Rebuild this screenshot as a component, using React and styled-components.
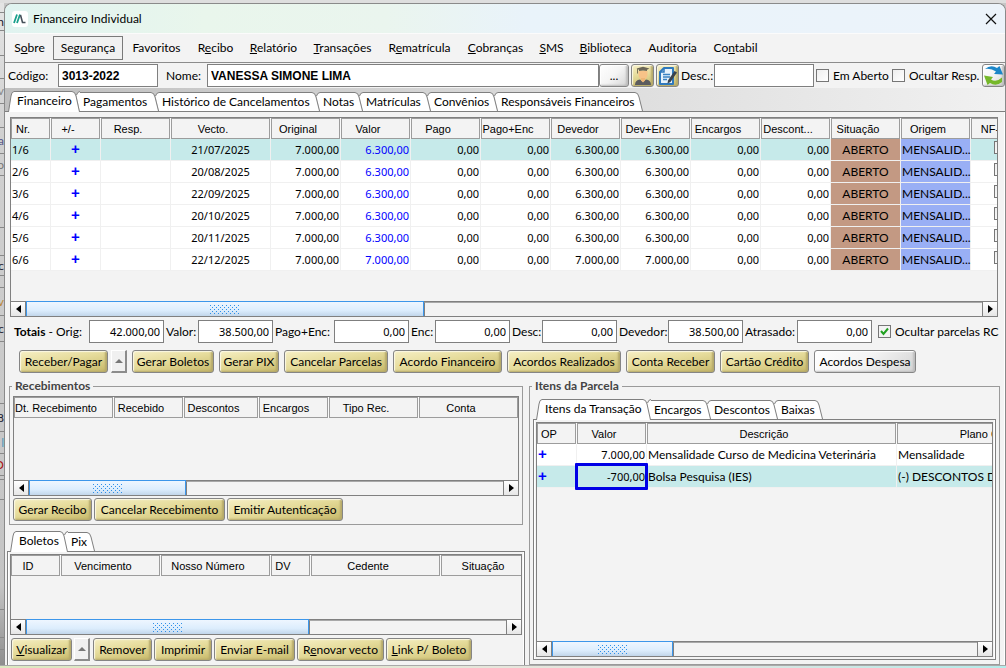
import React from "react";
import styled, { createGlobalStyle, css } from "styled-components";

const Global = createGlobalStyle`
  * { box-sizing: border-box; }
  body { margin: 0; background: #c6c6c6; font: 12px/16px Lato, "Segoe UI", sans-serif; color: #000; }
  button, input { font: inherit; color: inherit; margin: 0; }
  button { padding: 0; }
`;

const Desktop = styled.div`
  display: grid;
  grid-template-columns: 4px minmax(0, 1fr);
  grid-template-rows: 3px auto 1fr;
  min-height: 100vh;
  overflow: hidden;
`;

const TopStrip = styled.div`
  grid-column: 1 / -1;
  background: #dedede;
`;

const Behind = styled.div`
  display: flex;
  flex-direction: column;
  background: linear-gradient(#e4e4e4, #d0d0d0 20%, #c4c4c4 88%, #8e8e8e);
  overflow: hidden;
`;

const Sliver = styled.span`
  display: flex;
  align-items: center;
  justify-content: flex-end;
  height: ${(p) => p.$h}px;
  flex: none;
  border-bottom: 1px solid #888;
  color: ${(p) => p.$c || "#223"};
  overflow: hidden;
`;

const BottomStrip = styled.div`
  grid-column: 1 / -1;
  min-height: 3px;
  border-top: 1px solid #a9a9a9;
  background: linear-gradient(90deg, #dce8c0, #e6e6dc 50%, #e0e4e0 70%, #b4ecea);
`;

const Window = styled.main`
  border: 1px solid #8a8a8a;
  border-width: 1px 1px 0 1px;
  border-radius: 8px 8px 0 0;
  background: #f3f3f3;
  overflow: hidden;
`;

const TitleBar = styled.header`
  display: flex;
  align-items: center;
  height: 30px;
  padding: 0 8px 0 7px;
  gap: 5px;
  background: linear-gradient(90deg, #e0f3f0, #e9f6ec 20%, #eaf5ee 38%, #e9f3fa 52%, #ecf3fa);
  border-bottom: 1px solid #fbfbfb;
`;

const Title = styled.h1`
  flex: 1;
  margin: 0;
  font: inherit;
`;

const IconButton = styled.button`
  display: flex;
  border: 0;
  background: none;
`;

const MenuBar = styled.nav`
  display: flex;
  align-items: center;
  height: 29px;
  padding-left: 1px;
  border-bottom: 1px solid #8c8c8c;
`;

const MenuItem = styled.button`
  width: ${(p) => p.$w}px;
  height: 24px;
  margin-right: ${(p) => (p.$boxed ? 1 : 0)}px;
  border: 1px solid ${(p) => (p.$boxed ? "#7a7a7a" : "transparent")};
  background: ${(p) => (p.$boxed ? "#f1f1f1" : "none")};
  white-space: nowrap;
`;

const ToolRow = styled.div`
  display: flex;
  align-items: center;
  height: 25px;
  padding-left: 3px;
`;

const ToolLabel = styled.label`
  flex: none;
  width: ${(p) => p.$w}px;
  padding-left: ${(p) => p.$pad || 0}px;
  white-space: nowrap;
`;

const Field = styled.input`
  flex: none;
  width: ${(p) => p.$w}px;
  height: 23px;
  padding: 0 3px;
  border: 1px solid #7f7f7f;
  border-radius: 0;
  background: #fff;
  ${(p) => p.$strong && css`font: bold 12px "Liberation Sans", Arial, sans-serif;`}
  ${(p) => p.$grow && css`flex: 1; min-width: 0;`}
  ${(p) => p.$num && css`font: 11px "Noto Sans", sans-serif; text-align: right;`}
`;

const Check = styled.input.attrs({ type: "checkbox" })`
  appearance: none;
  flex: none;
  width: 13px;
  height: 13px;
  border: 1px solid #767676;
  background: linear-gradient(135deg, #eee, #fff);
  &:checked {
    background: url("data:image/svg+xml,%3Csvg xmlns='http://www.w3.org/2000/svg' viewBox='0 0 11 11'%3E%3Cpath d='M2 5l2.5 3L9 2.5' fill='none' stroke='%2321a121' stroke-width='2'/%3E%3C/svg%3E");
  }
`;

const CheckLabel = styled.label`
  display: flex;
  flex: none;
  align-items: center;
  gap: 4px;
  width: ${(p) => p.$w}px;
  white-space: nowrap;
`;

const Button = styled.button`
  display: flex;
  flex: none;
  align-items: center;
  justify-content: center;
  width: ${(p) => p.$w}px;
  height: 23px;
  border: 1px solid #858585;
  border-radius: 3px;
  white-space: nowrap;
  background: ${(p) =>
    p.$plain
      ? "linear-gradient(135deg, #fff, #f4f4f4 50%, #d4d4d4)"
      : "linear-gradient(170deg, #f6efc4, #e6dc9c 45%, #d3c67c 80%, #c5b768)"};
  box-shadow: inset 1px 1px 1px ${(p) => (p.$plain ? "#fff" : "#fbf8e4")},
    inset -2px -1px 2px ${(p) => (p.$plain ? "#bdbdbd" : "#b5a96a")};
`;

const DropButton = styled.button`
  flex: none;
  display: flex;
  align-items: center;
  justify-content: center;
  width: 16px;
  height: 23px;
  border: solid;
  border-width: 1px 2px 2px 1px;
  border-color: #fff #8c8c8c #8c8c8c #fff;
  background: #f0f0f0;
`;

const TabStrip = styled.div`
  display: flex;
  align-items: flex-end;
  height: ${(p) => p.$h}px;
  padding-left: 3px;
  border-bottom: 1px solid #7f7f7f;
  background: ${(p) => (p.$shaded ? "linear-gradient(90deg, #bfbfbf, #f1f1f1)" : "none")};
`;

const TabBox = styled.button`
  display: flex;
  flex: none;
  width: ${(p) => p.$w}px;
  height: ${(p) => (p.$on ? 21 : 19)}px;
  margin-bottom: ${(p) => (p.$on ? -1 : 0)}px;
  border: 0;
  background: none;
`;

const TabText = styled.span`
  flex: 1;
  height: 100%;
  min-width: 0;
  border-top: 1px solid #7f7f7f;
  background: #fff;
  line-height: 18px;
  white-space: nowrap;
  padding-left: 3px;
  text-align: left;
`;

const Page = styled.section`
  padding: 5px 0 0;
  border-right: 1px solid #fff;
`;

const GridBox = styled.div`
  display: flex;
  flex-direction: column;
  height: ${(p) => p.$h}px;
  margin: ${(p) => p.$m || 0};
  border: 1px solid #808080;
  overflow: hidden;
`;

const GridView = styled.div`
  flex: 1;
  min-height: 0;
  overflow: hidden;
`;

const Table = styled.table`
  table-layout: fixed;
  width: ${(p) => p.$w}px;
  border-collapse: separate;
  border-spacing: 0;
`;

const Th = styled.th`
  width: ${(p) => p.$w}px;
  height: 21px;
  padding: 0 15px 0 0;
  border: 0;
  border-right: 1px solid #fafafa;
  box-shadow: inset 0 0 0 1px #9c9c9c;
  font: 11px/16px "Liberation Sans", Arial, sans-serif;
  text-align: center;
  white-space: nowrap;
  background: #f3f3f3;
`;

const Row = styled.tr`
  background: ${(p) => (p.$on ? "#c6eaea" : "#fff")};
`;

const fills = { brown: "#c39983", blue: "#99aff5" };
const Td = styled.td`
  position: relative;
  height: 22px;
  padding: 0 1px;
  border-right: 1px solid #f0f0f0;
  border-bottom: 1px solid #f0f0f0;
  text-align: ${(p) => p.$a || "left"};
  white-space: nowrap;
  color: ${(p) => p.$c || "#000"};
  background: ${(p) => fills[p.$fill] || "none"};
  ${(p) => p.$num && css`font: 11px/16px "Noto Sans", sans-serif;`}
`;

const Plus = styled.span`
  font: bold 15px/14px "Liberation Sans", sans-serif;
  color: #00f;
`;

const Highlight = styled.span`
  position: absolute;
  inset: -3px -2px -3px -2px;
  border: 3px solid #0000e6;
  border-radius: 1px;
  z-index: 1;
`;

const Scroll = styled.div`
  display: flex;
  flex: none;
  height: 15px;
  border-top: 1px solid #808080;
`;

const ScrollArrow = styled.button`
  display: flex;
  flex: none;
  align-items: center;
  justify-content: center;
  width: 15px;
  border: 0;
  background: linear-gradient(#fff, #e6e6e6);
  border-${(p) => (p.$right ? "left" : "right")}: 1px solid #808080;
`;

const Thumb = styled.div`
  display: flex;
  flex: none;
  align-items: center;
  justify-content: center;
  width: ${(p) => p.$w}px;
  margin-top: -1px;
  border: 1px solid #3c96ea;
  border-bottom: 0;
  background: linear-gradient(#eef6ff, #dcedfd 60%, #c2d6ea);
`;

const Track = styled.div`
  flex: 1;
  border-top: 1px solid #a8a8a8;
  border-left: 1px solid #808080;
`;

const Totals = styled.div`
  display: flex;
  align-items: center;
  gap: 2px;
  padding: 3px 0 0 9px;
  overflow: hidden;
`;

const TotalLabel = styled.label`
  display: flex;
  flex: none;
  align-items: center;
  white-space: nowrap;
`;

const TotalText = styled.span`
  width: ${(p) => p.$w}px;
`;

const Actions = styled.div`
  display: flex;
  gap: ${(p) => p.$gap || 2}px;
  padding: ${(p) => p.$p};
`;

const Lower = styled.div`
  display: grid;
  grid-template-columns: minmax(0, 518fr) minmax(0, 471fr);
  gap: 4px;
  padding: 5px 4px 0 2px;
`;

const Left = styled.div`
  display: flex;
  flex-direction: column;
  gap: 6px;
`;

const Group = styled.fieldset`
  min-width: 0;
  margin: ${(p) => p.$m || 0};
  padding: ${(p) => p.$p};
  border: 1px solid #9a9a9a;
`;

const Legend = styled.legend`
  margin-left: ${(p) => p.$ml || 0}px;
  padding: 0 3px;
  font-weight: bold;
  color: #444;
`;

const Panel = styled.div`
  padding: 2px;
  border: 1px solid #808080;
  border-top: 0;
  border-bottom-width: ${(p) => (p.$open ? 0 : 1)}px;
  box-shadow: inset -1px 0 #fff, inset 1px 0 #fff;
`;

const Logo = () => (
  <svg width="16" height="16" viewBox="0 0 16 16">
    <rect width="16" height="16" rx="3" fill="#fff" />
    <path d="M2 12L5 3.500M5 12L8 3.500" stroke="#19a08c" strokeWidth="1.800" fill="none" />
    <path d="M8.500 4L10.500 11.500H13.500" stroke="#46505a" strokeWidth="1.600" fill="none" />
  </svg>
);

const Arrow = ({ right }) => (
  <svg width="5" height="8" viewBox="0 0 5 8">
    <path d={right ? "M0 0L5 4L0 8Z" : "M5 0L0 4L5 8Z"} />
  </svg>
);

const Up = () => (
  <svg width="8" height="4" viewBox="0 0 8 4"><path d="M0 4L4 0L8 4Z" fill="#777" /></svg>
);

const Dots = () => {
  const out = [];
  for (let y = 0; y < 5; y++)
    for (let x = 0; x < 8; x++)
      out.push(<rect key={x + "-" + y} x={x * 4 + (y % 2) * 2} y={y * 2} width="1" height="1" fill="#2f8fe8" />);
  return <svg width="30" height="9" shapeRendering="crispEdges">{out}</svg>;
};

const Student = () => (
  <svg width="20" height="20" viewBox="0 0 20 20">
    <path d="M2 19Q2 14 7 13.500L10 16L13 13.500Q18 14 18 19Z" fill="#5c5c5e" />
    <path d="M5.500 5H14.500V9Q14 13 10 14Q6 13 5.500 9Z" fill="#f7c388" />
    <path d="M8 12H12V14.500L10 16.500L8 14.500Z" fill="#eeb677" />
    <path d="M3.500 2.500L10 .8L16.500 2.500L14 3.800V5Q10 4 6 5V3.800Z" fill="#6b6657" />
    <path d="M4.500 3V7.500" stroke="#7b7458" />
  </svg>
);

const Note = () => (
  <svg width="20" height="20" viewBox="0 0 20 20">
    <path d="M6 2H15V18H2V6Z" fill="#e6f2fb" stroke="#2f79bd" strokeWidth="2" strokeLinejoin="round" />
    <path d="M6 2V6H2" fill="none" stroke="#2f79bd" strokeWidth="1.500" />
    <path d="M5 8.500H12M5 11H12M5 13.500H9" stroke="#3a83c2" strokeWidth="1.300" />
    <path d="M10 14.500L16.500 5L19 6.500L12.500 16L9.500 17.500Z" fill="#39424c" />
  </svg>
);

const Refresh = () => (
  <svg width="21" height="21" viewBox="0 0 21 21">
    <path d="M2 4Q8-1 14 3L16.500 1L20 9.500L11 9L13 6.500Q8 3 2 4Z" fill="#1c86c8" />
    <path d="M19 17Q13 22 7 18L4.500 20L1 10.500L10 12L8 14.500Q13 18 19 12.500Z" fill="#76b82a" />
  </svg>
);

const Close = () => (
  <svg width="12" height="12" viewBox="0 0 12 12">
    <path d="M1 1L11 11M11 1L1 11" stroke="#111" strokeWidth="1.200" />
  </svg>
);

const TabLeft = () => (
  <svg width="6" height="21" viewBox="0 0 6 21">
    <path d="M0.500 21L3 5Q3.600 0.500 6 0.500V21Z" fill="#fff" />
    <path d="M0.500 21L3 5Q3.600 0.500 6 0.500" fill="none" stroke="#7f7f7f" />
  </svg>
);

const TabRight = ({ h, last }) => (
  <svg width="8" height={h} viewBox={`0 0 8 ${h}`}>
    <path d={`M0 .5Q3 .5 4 5L7.500 ${h}H0Z`} fill="#fff" />
    {!last && <path d={`M8 .5Q5 .5 4.500 4.500L8 ${h}Z`} fill="#fff" />}
    <path d={`M0 .5Q3 .5 4 5L7.500 ${h}`} fill="none" stroke="#7f7f7f" />
    {!last && <path d="M8 .5Q5.500 .5 4.500 4" fill="none" stroke="#7f7f7f" />}
  </svg>
);

const Tabs = ({ items, h, shaded }) => (
  <TabStrip $h={h} $shaded={shaded} role="tablist">
    {items.map(([t, w], i) => (
      <TabBox key={t} $w={w} $on={i === 0} role="tab" aria-selected={i === 0}>
        {i === 0 && <TabLeft />}
        <TabText>{t}</TabText>
        <TabRight h={i === 0 ? 21 : 19} last={i === items.length - 1} />
      </TabBox>
    ))}
  </TabStrip>
);

const Mnemonic = ({ text }) => {
  const i = text.indexOf("_");
  if (i < 0) return text;
  return <span>{text.slice(0, i)}<u>{text[i + 1]}</u>{text.slice(i + 2)}</span>;
};

const ScrollBar = ({ w }) => (
  <Scroll>
    <ScrollArrow aria-label="Rolar à esquerda"><Arrow /></ScrollArrow>
    <Thumb $w={w}><Dots /></Thumb>
    <Track />
    <ScrollArrow $right aria-label="Rolar à direita"><Arrow right /></ScrollArrow>
  </Scroll>
);

const DataGrid = ({ cols, h, m, thumb, children }) => (
  <GridBox $h={h} $m={m}>
    <GridView>
      <Table $w={cols.reduce((a, c) => a + c[1], 0)}>
        <thead><tr>{cols.map(([t, w]) => <Th key={t} $w={w}>{t}</Th>)}</tr></thead>
        {children && <tbody>{children}</tbody>}
      </Table>
    </GridView>
    <ScrollBar w={thumb} />
  </GridBox>
);

const menu = [["S_obre", 47], ["Segurança", 70, true], ["Favoritos", 65], ["R_ecibo", 53], ["_Relatório", 63], ["_Transações", 75], ["R_ematrícula", 79], ["_Cobranças", 73], ["_SMS", 39], ["_Biblioteca", 69], ["Auditoria", 65], ["Co_ntabil", 61]];
const mainTabs = [["Financeiro", 72], ["Pagamentos", 79], ["Histórico de Cancelamentos", 161], ["Notas", 43], ["Matrículas", 68], ["Convênios", 67], ["Responsáveis Financeiros", 145]];
const mainCols = [["Nr.", 40], ["+/-", 50], ["Resp.", 70], ["Vecto.", 100], ["Original", 70], ["Valor", 70], ["Pago", 70], ["Pago+Enc", 70], ["Devedor", 70], ["Dev+Enc", 70], ["Encargos", 70], ["Descont...", 70], ["Situação", 70], ["Origem", 70], ["NF-e", 60]];
const rows = [["1/6", "21/07/2025", "6.300,00"], ["2/6", "20/08/2025", "6.300,00"], ["3/6", "22/09/2025", "6.300,00"], ["4/6", "20/10/2025", "6.300,00"], ["5/6", "20/11/2025", "6.300,00"], ["6/6", "22/12/2025", "7.000,00"]];
const totals = [["Valor:", 32, "38.500,00"], ["Pago+Enc:", 59, "0,00"], ["Enc:", 24, "0,00"], ["Desc:", 30, "0,00"], ["Devedor:", 49, "38.500,00"], ["Atrasado:", 52, "0,00"]];
const mainActions = [["Gerar Boletos", 82], ["Gerar PIX", 60], ["Cancelar Parcelas", 104], ["Acordo Financeiro", 109], ["Acordos Realizados", 114], ["Conta Receber", 89], ["Cartão Crédito", 89]];
const slivers = [[10], [18, "n"], [25], [23], [25, "v", "#888"], [24], [26, "a", "#558"], [22, "o", "#777"], [52], [28], [20, "c"], [12], [28, "v", "#b83"], [26, "c"], [62], [28, "8"], [22, "l", "#59b"], [22, "D", "#a11"], [4], [20], [110], [28], [12]];

export default function App() {
  return (
    <>
      <Global />
      <Desktop>
        <TopStrip />
        <Behind aria-hidden="true">
          {slivers.map(([h, t, c], i) => <Sliver key={i} $h={h} $c={c}>{t}</Sliver>)}
        </Behind>
        <Window>
          <TitleBar>
            <Logo />
            <Title>Financeiro Individual</Title>
            <IconButton aria-label="Fechar"><Close /></IconButton>
          </TitleBar>
          <MenuBar>
            {menu.map(([t, w, b]) => <MenuItem key={t} $w={w} $boxed={b}><Mnemonic text={t} /></MenuItem>)}
          </MenuBar>
          <ToolRow>
            <ToolLabel $w={50} htmlFor="codigo">Código:</ToolLabel>
            <Field id="codigo" $w={100} $strong defaultValue="3013-2022" />
            <ToolLabel $w={49} $pad={8} htmlFor="nome">Nome:</ToolLabel>
            <Field id="nome" $grow $strong defaultValue="VANESSA SIMONE LIMA" />
            <Button $w={30} $plain>...</Button>
            <Actions $p="0 0 0 2px">
              <Button $w={23} aria-label="Aluno"><Student /></Button>
              <Button $w={23} aria-label="Anotações"><Note /></Button>
            </Actions>
            <ToolLabel $w={35} $pad={2} htmlFor="desc">Desc.:</ToolLabel>
            <Field id="desc" $w={100} />
            <Actions $p="0 0 0 2px">
              <CheckLabel $w={74}><Check />Em Aberto</CheckLabel>
              <CheckLabel $w={90}><Check />Ocultar Resp.</CheckLabel>
            </Actions>
            <Button $w={23} $plain aria-label="Atualizar"><Refresh /></Button>
          </ToolRow>
          <Tabs items={mainTabs} h={24} shaded />
          <Page>
            <DataGrid cols={mainCols} h={200} m="0 6px 0 5px" thumb={398}>
              {rows.map(([n, d, v], i) => (
                <Row key={n} $on={i === 0}>
                  <Td $num>{n}</Td>
                  <Td $a="center"><Plus>+</Plus></Td>
                  <Td />
                  <Td $num $a="center">{d}</Td>
                  <Td $num $a="right">7.000,00</Td>
                  <Td $num $a="right" $c="#00f">{v}</Td>
                  <Td $num $a="right">0,00</Td>
                  <Td $num $a="right">0,00</Td>
                  <Td $num $a="right">{v}</Td>
                  <Td $num $a="right">{v}</Td>
                  <Td $num $a="right">0,00</Td>
                  <Td $num $a="right">0,00</Td>
                  <Td $a="center" $fill="brown">ABERTO</Td>
                  <Td $fill="blue">MENSALID...</Td>
                  <Td $a="center"><Check aria-label={`NF-e ${n}`} /></Td>
                </Row>
              ))}
            </DataGrid>
            <Totals>
              <TotalLabel>
                <TotalText $w={75}><b>Totais</b> - Orig:</TotalText>
                <Field $w={75} $num defaultValue="42.000,00" />
              </TotalLabel>
              {totals.map(([t, w, v]) => (
                <TotalLabel key={t}>
                  <TotalText $w={w}>{t}</TotalText>
                  <Field $w={75} $num defaultValue={v} />
                </TotalLabel>
              ))}
              <Actions $p="0 0 0 4px">
                <CheckLabel $w={121}><Check defaultChecked />Ocultar parcelas RC</CheckLabel>
              </Actions>
            </Totals>
            <Actions $gap={5} $p="7px 0 0 14px">
              <Actions $gap={3} $p="0">
                <Button $w={89}>Receber/Pagar</Button>
                <DropButton aria-label="Mais opções"><Up /></DropButton>
              </Actions>
              {mainActions.map(([t, w]) => <Button key={t} $w={w}>{t}</Button>)}
              <Button $w={102} $plain>Acordos Despesa</Button>
            </Actions>
            <Lower>
              <Left>
                <Group $m="0 2px" $p="2px 3px 3px">
                  <Legend $ml={-1}>Recebimentos</Legend>
                  <DataGrid h={100} thumb={157} cols={[["Dt. Recebimento", 100], ["Recebido", 70], ["Descontos", 75], ["Encargos", 70], ["Tipo Rec.", 90], ["Conta", 100]]} />
                  <Actions $p="2px 0 0">
                    <Button $w={79}>Gerar Recibo</Button>
                    <Button $w={131}>Cancelar Recebimento</Button>
                    <Button $w={116}>Emitir Autenticação</Button>
                  </Actions>
                </Group>
                <div>
                  <Tabs h={21} items={[["Boletos", 58], ["Pix", 27]]} />
                  <Panel $open>
                    <DataGrid h={81} thumb={283} cols={[["ID", 50], ["Vencimento", 100], ["Nosso Número", 110], ["DV", 40], ["Cedente", 130], ["Situação", 100]]} />
                    <Actions $p="3px 0 2px 1px">
                      <Button $w={61}><Mnemonic text="_Visualizar" /></Button>
                      <Actions $p="0 1px 0 0">
                        <DropButton aria-label="Mais opções"><Up /></DropButton>
                      </Actions>
                      <Button $w={59}>Remover</Button>
                      <Button $w={58}>Imprimir</Button>
                      <Button $w={81}>Enviar E-mail</Button>
                      <Button $w={87}><Mnemonic text="R_enovar vecto" /></Button>
                      <Button $w={86}><Mnemonic text="_Link P/ Boleto" /></Button>
                    </Actions>
                  </Panel>
                </div>
              </Left>
              <Group $p="3px">
                <Legend $ml={-1}>Itens da Parcela</Legend>
                <Tabs h={23} items={[["Itens da Transação", 115], ["Encargos", 60], ["Descontos", 67], ["Baixas", 45]]} />
                <Panel>
                  <DataGrid h={235} thumb={121} cols={[["OP", 40], ["Valor", 70], ["Descrição", 250], ["Plano Conta", 202]]}>
                    <Row>
                      <Td><Plus>+</Plus></Td>
                      <Td $num $a="right">7.000,00</Td>
                      <Td>Mensalidade Curso de Medicina Veterinária</Td>
                      <Td>Mensalidade</Td>
                    </Row>
                    <Row $on>
                      <Td><Plus>+</Plus></Td>
                      <Td $num $a="right">-700,00<Highlight /></Td>
                      <Td>Bolsa Pesquisa (IES)</Td>
                      <Td>(-) DESCONTOS DIVERSOS</Td>
                    </Row>
                  </DataGrid>
                </Panel>
              </Group>
            </Lower>
          </Page>
        </Window>
        <BottomStrip />
      </Desktop>
    </>
  );
}
